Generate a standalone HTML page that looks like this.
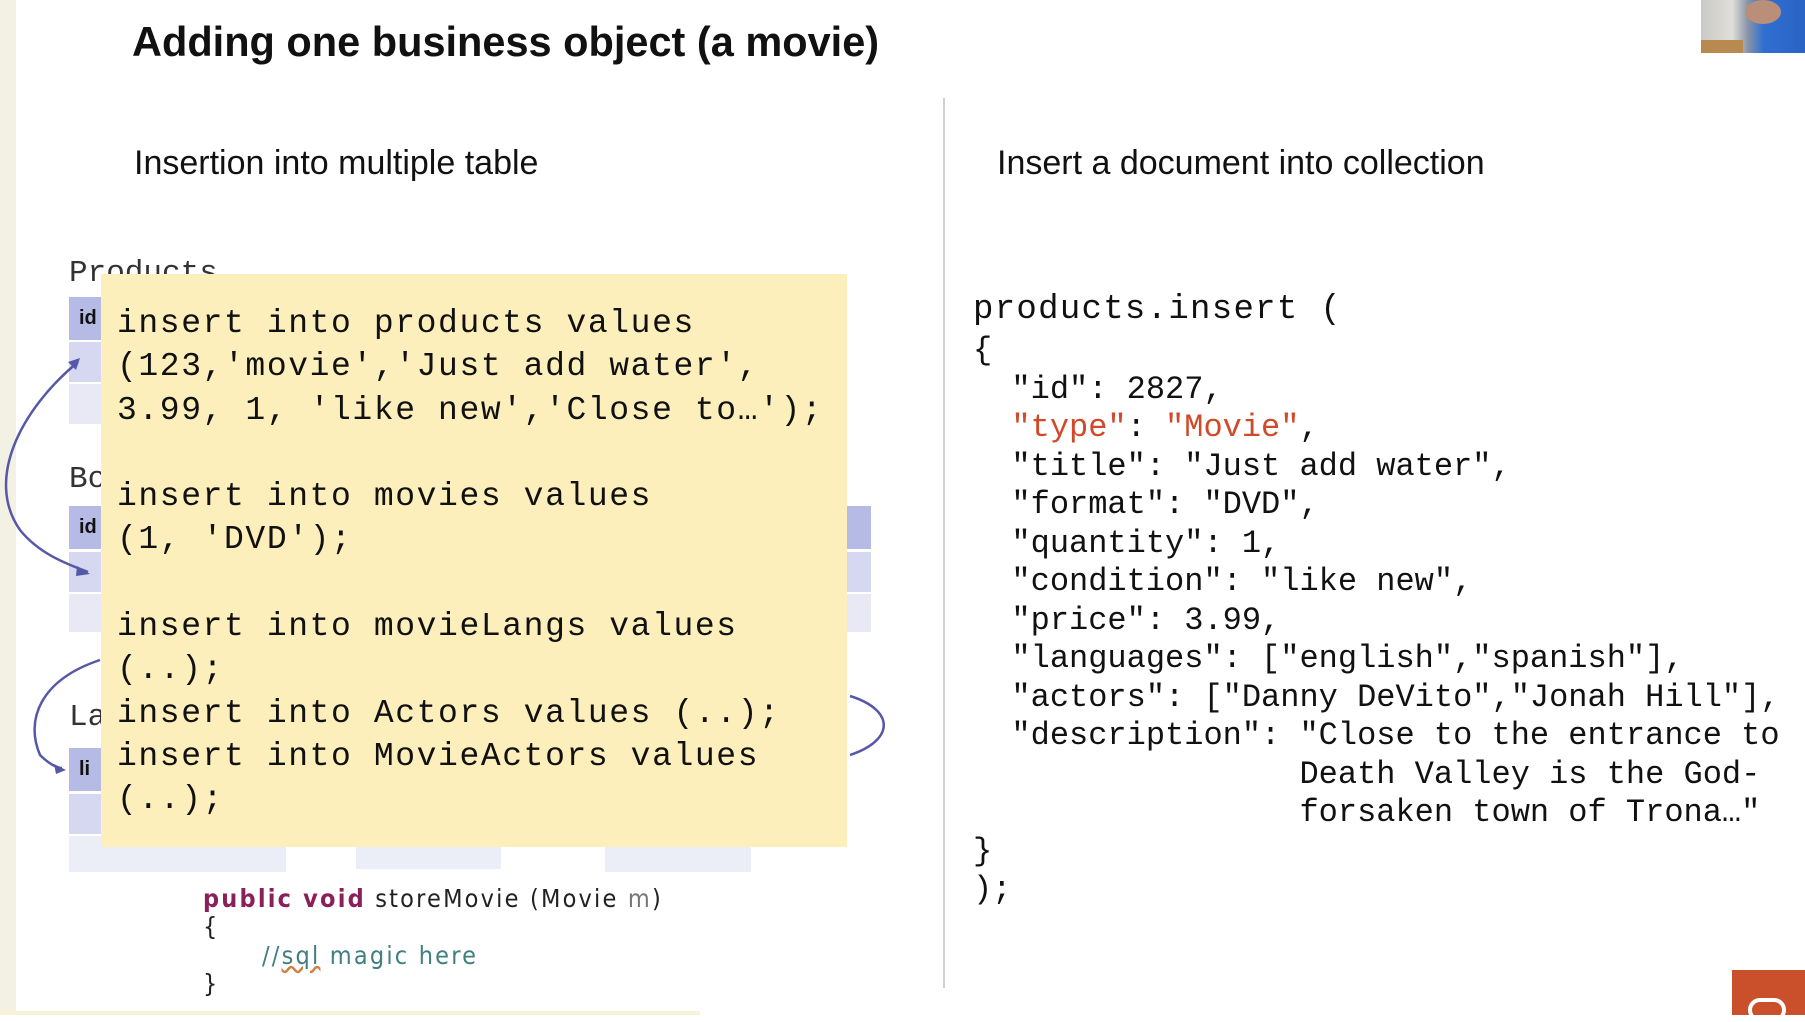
<!DOCTYPE html>
<html><head><meta charset="utf-8"><style>
*{margin:0;padding:0}
body{width:1805px;height:1015px;background:#fff;position:relative;overflow:hidden;font-family:"Liberation Sans",sans-serif;color:#111}
.a{position:absolute;white-space:pre}
.mono{font-family:"Liberation Mono",monospace}
</style></head><body>
<div class="a" style="left:0;top:0;width:16px;height:1015px;background:#f3f1e4"></div>
<div class="a" style="left:0;top:1011px;width:700px;height:4px;background:#f8f2d6"></div>
<div class="a" style="left:132px;top:18px;font-size:41.5px;font-weight:bold;color:#111">Adding one business object (a movie)</div>
<div class="a" style="left:1701px;top:0;width:104px;height:53px;background:linear-gradient(90deg,#c9c9c6 0%,#e0ded8 30%,#8a94a8 45%,#2f6fd0 60%,#2a64c4 100%)"></div>
<div class="a" style="left:1701px;top:40px;width:42px;height:13px;background:#b88a50"></div>
<div class="a" style="left:1745px;top:0;width:36px;height:24px;border-radius:50%;background:#b98f7a"></div>
<div class="a" style="left:943px;top:98px;width:2px;height:890px;background:#d0d0d0"></div>
<div class="a" style="left:134px;top:144px;font-size:34px">Insertion into multiple table</div>
<div class="a" style="left:997px;top:144px;font-size:34px">Insert a document into collection</div>

<div class="a" style="left:69px;top:256px;font-size:31px;color:#333;font-family:'Liberation Mono',monospace">Products</div>
<div class="a" style="left:69px;top:297px;width:32px;height:43px;background:#b6bbe6;font-size:20px;font-weight:bold;line-height:43px;padding-left:10px;box-sizing:border-box">id</div>
<div class="a" style="left:69px;top:342px;width:32px;height:40px;background:#d5d8f0"></div>
<div class="a" style="left:69px;top:384px;width:32px;height:40px;background:#e8e9f5"></div>
<div class="a mono" style="left:69px;top:462px;font-size:31px;color:#333">Bo</div>
<div class="a" style="left:69px;top:506px;width:802px;height:43px;background:#b6bbe6;font-size:20px;font-weight:bold;line-height:43px;padding-left:10px;box-sizing:border-box">id</div>
<div class="a" style="left:69px;top:552px;width:802px;height:40px;background:#d5d8f0"></div>
<div class="a" style="left:69px;top:594px;width:802px;height:38px;background:#e8e9f5"></div>
<div class="a mono" style="left:69px;top:700px;font-size:31px;color:#333">La</div>
<div class="a" style="left:69px;top:748px;width:32px;height:43px;background:#b6bbe6;font-size:20px;font-weight:bold;line-height:43px;padding-left:10px;box-sizing:border-box">li</div>
<div class="a" style="left:69px;top:794px;width:32px;height:40px;background:#d5d8f0"></div>
<div class="a" style="left:69px;top:836px;width:217px;height:36px;background:#eceef7"></div>
<div class="a" style="left:356px;top:836px;width:145px;height:33px;background:#eceef7"></div>
<div class="a" style="left:605px;top:836px;width:146px;height:36px;background:#eceef7"></div>
<svg class="a" style="left:0;top:0" width="1805" height="1015">
<g fill="none" stroke="#5558a6" stroke-width="2.5">
<path d="M78 362 C20 410 -15 480 20 530 C40 555 70 565 88 572"/>
<path d="M100 660 C40 680 25 720 40 755 C50 765 58 768 62 768"/>
<path d="M850 696 C895 710 895 740 850 755"/>
</g>
<g fill="#5558a6"><path d="M80 358 l-12 4 8 8z"/><path d="M90 574 l-13 -8 -1 10z"/><path d="M66 770 l-12 -6 2 10z"/></g>
</svg>

<div class="a" style="left:101px;top:274px;width:746px;height:573px;background:#fcefbc"></div>
<pre class="a mono" style="left:117px;top:302px;font-size:33px;letter-spacing:1.6px;line-height:43.3px;color:#111">insert into products values
(123,'movie','Just add water',
3.99, 1, 'like new','Close to…');

insert into movies values
(1, 'DVD');

insert into movieLangs values
(..);
insert into Actors values (..);
insert into MovieActors values
(..);</pre>

<pre class="a" style="left:203px;top:885px;font-family:'DejaVu Sans Condensed','DejaVu Sans',sans-serif;font-size:25px;letter-spacing:2.2px;line-height:28.3px;color:#222"><b style="color:#8b1f5a;font-weight:bold">public void</b> storeMovie (Movie <span style="color:#777">m</span>)
{
<span style="color:#3f7f7f;padding-left:59px">//<span style="text-decoration:underline wavy #d08040">sql</span> magic here</span>
}</pre>

<pre class="a mono" style="left:973px;top:291px;font-size:34px;letter-spacing:1.3px;line-height:38.5px;color:#111">products.insert (</pre>
<pre class="a mono" style="left:973px;top:332px;font-size:32px;letter-spacing:0px;line-height:38.5px;color:#111">{
  "id": 2827,
  <span style="color:#d04a2a">"type"</span>: <span style="color:#d04a2a">"Movie"</span>,
  "title": "Just add water",
  "format": "DVD",
  "quantity": 1,
  "condition": "like new",
  "price": 3.99,
  "languages": ["english","spanish"],
  "actors": ["Danny DeVito","Jonah Hill"],
  "description": "Close to the entrance to
                 Death Valley is the God-
                 forsaken town of Trona…"
}
);</pre>

<div class="a" style="left:1732px;top:970px;width:73px;height:45px;background:#c9502b"></div>
<div class="a" style="left:1748px;top:998px;width:38px;height:24px;border:4px solid #fff;border-radius:14px;box-sizing:border-box"></div>
</body></html>
